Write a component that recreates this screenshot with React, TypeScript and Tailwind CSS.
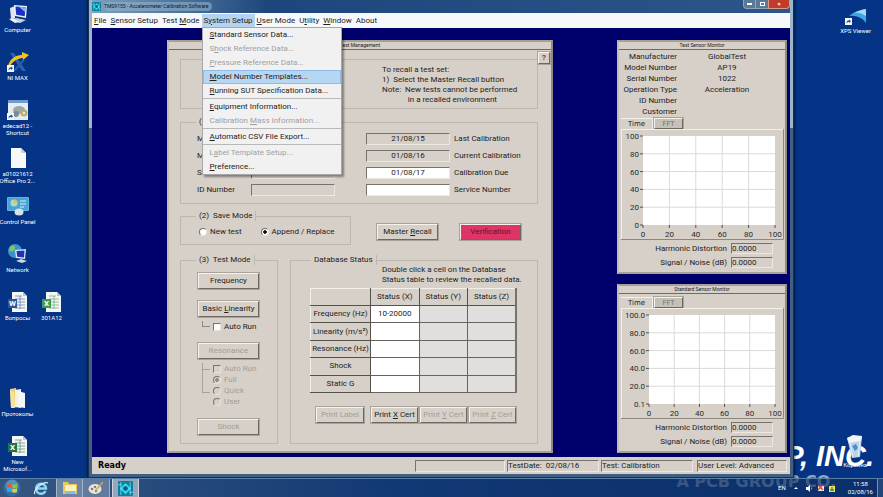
import { useId, type ReactNode } from "react";

/* ---------- desktop icons ---------- */

function ComputerIcon() {
  return (
    <svg viewBox="0 0 22 20" className="h-[20px] w-[22px]">
      <path d="M3 4 L8 2 L8 14 L4 15Z" fill="#dfe6ee" />
      <path d="M7 1 L20 2 L19 14 L8 12Z" fill="#e8eef5" />
      <path d="M8.500 2.500 L18.500 3.300 L17.700 12.300 L9.200 10.800Z" fill="#1a2fc0" />
      <path d="M12 3 L18.500 3.300 L18 8Z" fill="#7fb0f0" />
      <path d="M3 16 L9 14 L19 16 L13 19Z" fill="#c6d3df" />
      <path d="M2 15 L6 14 L12 18 L8 19Z" fill="#eef2f6" />
    </svg>
  );
}

function ShortcutArrow() {
  return (
    <g>
      <rect x="0" y="13" width="7" height="7" fill="#f4f7fb" />
      <path d="M1.500 18.500 C1.500 16 2.500 15.500 4 15.500 V14.300 L6 16.200 L4 18 V17 C3 17 2.300 17.300 1.500 18.500Z" fill="#1d4f9c" />
    </g>
  );
}

function NiMaxIcon() {
  return (
    <svg viewBox="0 0 22 20" className="h-[20px] w-[22px]">
      <path d="M3 1 L7 1 L19 19 L15 19Z" fill="#2f5fb4" />
      <path d="M15 8 L18 8 L9 19 L6 19Z" fill="#2a57ad" />
      <path d="M1 14 C3 7 8 3 15 3 V0 L22 3 L16 8 V6 C10 6.500 6 9 3 14Z" fill="#f6c31c" />
      <ShortcutArrow />
    </svg>
  );
}

function EdecadIcon() {
  return (
    <svg viewBox="0 0 22 20" className="h-[20px] w-[22px]">
      <rect x="1" y="0" width="20" height="20" fill="#e8ecf1" />
      <rect x="1" y="0" width="20" height="3" fill="#6f9bd2" />
      <ellipse cx="12" cy="10" rx="6" ry="4" fill="#9aa8a8" />
      <circle cx="17" cy="13" r="3.500" fill="#b9b06a" />
      <circle cx="9" cy="14" r="3" fill="#7b8c93" />
      <circle cx="17" cy="13" r="1.200" fill="#eee" />
      <ShortcutArrow />
    </svg>
  );
}

function FileIcon() {
  return (
    <svg viewBox="0 0 22 20" className="h-[20px] w-[22px]">
      <path d="M4 0 H14 L19 5 V20 H4Z" fill="#f7f8f8" />
      <path d="M14 0 L19 5 H14Z" fill="#c9d0d6" />
    </svg>
  );
}

function ControlPanelIcon() {
  return (
    <svg viewBox="0 0 22 20" className="h-[20px] w-[22px]">
      <rect x="0" y="1" width="22" height="14" rx="1" fill="#5fb4de" />
      <rect x="1" y="2" width="20" height="12" fill="#4aa3d4" />
      <circle cx="7" cy="7" r="3.500" fill="#a7dcc0" />
      <path d="M7 7 V3.500 A3.500 3.500 0 0 1 10.500 7Z" fill="#e6b95c" />
      <path d="M13 5 H19 M13 8 H19 M13 11 H17" stroke="#d6eefa" strokeWidth="1" />
      <ellipse cx="12" cy="16" rx="4.500" ry="3.500" fill="#d5e2ec" />
    </svg>
  );
}

function NetworkIcon() {
  return (
    <svg viewBox="0 0 22 20" className="h-[20px] w-[22px]">
      <circle cx="8" cy="7" r="7" fill="#3a93cf" />
      <path d="M3 3 C6 0 9 2 8 5 C7 8 3 8 2 6Z M9 8 C12 7 14 9 12 12Z" fill="#7cc46d" />
      <path d="M8 6 L19 5 L18 15 L9 14Z" fill="#e3e9f0" />
      <path d="M9.500 7 L17.500 6.500 L17 13.500 L10.200 12.800Z" fill="#1733b6" />
      <path d="M9 17 L14 15 L20 17 L15 19Z" fill="#cbd6e1" />
    </svg>
  );
}

function SheetIcon({ color, letter }: { color: string; letter: string }) {
  return (
    <svg viewBox="0 0 22 20" className="h-[20px] w-[22px]">
      <path d="M5 0 H16 L20 4 V20 H5Z" fill="#f3f6f4" />
      <path d="M16 0 L20 4 H16Z" fill="#b8c4bd" />
      <path d="M8 4 H15 M8 7 H18 M8 10 H18 M8 13 H18 M8 16 H18 M13 4 V17" stroke={color} strokeWidth="0.800" opacity="0.700" />
      <rect x="1" y="7" width="9" height="9" fill={color} />
      <text x="5.500" y="14.200" fontSize="8" fontWeight="700" textAnchor="middle" fill="#fff">{letter}</text>
    </svg>
  );
}

function FolderIcon() {
  return (
    <svg viewBox="0 0 22 20" className="h-[20px] w-[22px]">
      <path d="M3 1 L9 0 L10 19 L4 20Z" fill="#e9cf7c" />
      <path d="M8 2 L14 1 L14 20 L8 19Z" fill="#f7f1da" />
      <path d="M11 3 L18 5 L18 20 L11 19Z" fill="#f4f6f8" />
      <path d="M3 2 L7 4 L8 20 L4 20Z" fill="#f6e3a0" />
    </svg>
  );
}

function XpsIcon() {
  return (
    <svg viewBox="0 0 22 20" className="h-[20px] w-[22px]">
      <path d="M4 11 C9 7 14 5 21 4 L21 18 C18 13 11 10 4 11Z" fill="#3ea6e6" />
      <path d="M9 8 C13 6 17 4.500 21 4 L21 11 C17 8 13 7 9 8Z" fill="#9bdcf8" />
      <ShortcutArrow />
    </svg>
  );
}

function RecycleIcon() {
  return (
    <svg viewBox="0 0 22 24" className="h-[24px] w-[22px]">
      <path d="M3 3 L18 1 L16 22 L8 23Z" fill="#b9d3ea" />
      <path d="M3 3 L9 0 L18 1 L17 6 L5 8Z" fill="#f1f5f8" />
      <path d="M8 11 L12 9 L14 13 L11 16Z" fill="#4b8fd0" />
      <path d="M6 7 L9 22 M16 6 L14 21" stroke="#e7f0f8" strokeWidth="1" />
    </svg>
  );
}

function DesktopItem({ icon, label, className = "" }: { icon: ReactNode; label: string; className?: string }) {
  return (
    <button className={`flex flex-col items-center gap-[2px] whitespace-pre text-center text-[6px] leading-[7px] text-white ${className}`}>
      {icon}
      {label}
    </button>
  );
}

/* ---------- form parts ---------- */

const group = "border border-[#bdb7ad]";
const legendStyle = "h-[10px] border-r border-[#bdb7ad] px-[3px] leading-[10px] whitespace-pre";
const sunken = "border border-r-[#ece8e1] border-b-[#ece8e1] border-t-[#77736c] border-l-[#77736c]";
const raised = "border border-t-[#f6f3ee] border-l-[#f6f3ee] border-r-[#6c6861] border-b-[#6c6861] shadow-[0_0_0_1px_#a9a49b]";

function PushButton({ children, disabled, className = "" }: { children: ReactNode; disabled?: boolean; className?: string }) {
  return (
    <button
      disabled={disabled}
      className={`${raised} flex h-[16px] shrink-0 items-center justify-center whitespace-pre leading-[10px] disabled:text-[#a39e95] ${className}`}
    >
      <span>{children}</span>
    </button>
  );
}

function Choice({ type, name, label, checked, disabled }: { type: "radio" | "checkbox"; name?: string; label: string; checked?: boolean; disabled?: boolean }) {
  const shape =
    type === "radio"
      ? "rounded-full checked:bg-[radial-gradient(circle,#111_0_1.500px,transparent_2px)] disabled:checked:bg-[radial-gradient(circle,#8f8a82_0_1.500px,transparent_2px)]"
      : "";
  return (
    <label className={`flex h-[11px] items-center gap-[3px] leading-[11px] ${disabled ? "text-[#a39e95]" : ""}`}>
      <input
        type={type}
        name={name}
        defaultChecked={checked}
        disabled={disabled}
        className={`size-[8px] appearance-none border border-t-[#77736c] border-l-[#77736c] border-r-[#e8e4dd] border-b-[#e8e4dd] bg-white disabled:bg-[#d6d0c8] ${shape}`}
      />
      {label}
    </label>
  );
}

function Field({ label, value, after, editable }: { label: string; value: string; after?: boolean; editable?: boolean }) {
  const id = useId();
  const text = (
    <label htmlFor={id} className={after ? "ml-[4px]" : "w-[54px]"}>
      {label}
    </label>
  );
  return (
    <div className="flex h-[12px] items-center whitespace-nowrap leading-[12px]">
      {!after && text}
      <input
        id={id}
        defaultValue={value}
        readOnly={!editable}
        className={`${sunken} h-[12px] w-[84px] text-center ${editable ? "bg-white" : "bg-transparent"}`}
      />
      {after && text}
    </div>
  );
}

function Readout({ label }: { label: string }) {
  const id = useId();
  return (
    <div className="flex h-[11px] items-center justify-end gap-[4px] pr-[12px] leading-[11px]">
      <label htmlFor={id}>{label}</label>
      <input id={id} readOnly defaultValue="0.0000" className={`${sunken} h-[11px] w-[42px] bg-transparent`} />
    </div>
  );
}

/* ---------- menu ---------- */

type Entry = { before?: string; key: string; after: string };

function Mnemonic({ before = "", after, letter }: { before?: string; after: string; letter: string }) {
  return (
    <span>
      {before}
      <u>{letter}</u>
      {after}
    </span>
  );
}

const setupMenu: ({ separator: true } | (Entry & { disabled?: boolean; active?: boolean }))[] = [
  { key: "S", after: "tandard Sensor Data..." },
  { before: "S", key: "h", after: "ock Reference Data...", disabled: true },
  { key: "P", after: "ressure Reference Data...", disabled: true },
  { key: "M", after: "odel Number Templates...", active: true },
  { key: "R", after: "unning SUT Specification Data..." },
  { separator: true },
  { key: "E", after: "quipment Information..." },
  { before: "Calibration ", key: "M", after: "ass Information...", disabled: true },
  { separator: true },
  { key: "A", after: "utomatic CSV File Export..." },
  { separator: true },
  { before: "L", key: "a", after: "bel Template Setup...", disabled: true },
  { key: "P", after: "reference..." },
];

function SetupMenu() {
  return (
    <div className="absolute top-[13px] left-0 z-20 flex w-[140px] flex-col border border-[#a7a7a7] bg-[#f1f1f1] shadow-[2px_2px_2px_#0006]">
      {setupMenu.map((item, i) =>
        "separator" in item ? (
          <hr key={i} className="my-0 h-[2px] border-0 border-t border-[#b9b9b9]" />
        ) : (
          <button
            key={i}
            disabled={item.disabled}
            className={`h-[14px] border px-[6px] text-left leading-[12px] disabled:text-[#a0a0a0] ${item.active ? "border-[#8fbce6] bg-[#b5d7f3]" : "border-transparent"}`}
          >
            <Mnemonic before={item.before} letter={item.key} after={item.after} />
          </button>
        ),
      )}
    </div>
  );
}

const menuBar: Entry[] = [
  { key: "F", after: "ile" },
  { key: "S", after: "ensor Setup" },
  { before: "Test ", key: "M", after: "ode" },
  { before: "S", key: "y", after: "stem Setup" },
  { key: "U", after: "ser Mode" },
  { before: "U", key: "t", after: "ility" },
  { key: "W", after: "indow" },
  { key: "", after: "About" },
];

function MenuBar() {
  return (
    <nav className="flex h-[15px] shrink-0 bg-[#f7f8fa] pt-px whitespace-nowrap">
      {menuBar.map((m) => {
        const open = m.after === "stem Setup";
        return (
          <div key={m.after} className="relative">
            <button className={`h-[13px] px-[2px] leading-[12px] ${open ? "bg-[#b5d3f0]" : ""}`}>
              <Mnemonic before={m.before} letter={m.key} after={m.after} />
            </button>
            {open && <SetupMenu />}
          </div>
        );
      })}
    </nav>
  );
}

/* ---------- child windows ---------- */

function Panel({ title, className = "", children }: { title: string; className?: string; children: ReactNode }) {
  return (
    <section className={`relative shrink-0 border-2 border-t-[#a5a199] border-l-[#c3bfae] border-r-[#8f8b84] border-b-[#a5a199] bg-[#d6d0c8] ${className}`}>
      <h2 className="h-[8px] border-b border-[#6f6b64] text-center text-[5px] leading-[7px]">{title}</h2>
      {children}
    </section>
  );
}

function SensorFields() {
  return (
    <fieldset className={`${group} mt-[8px] flex h-[87px] flex-col`}>
      <legend className={`${legendStyle} ml-[15px]`}>(1)</legend>
      <div className="flex gap-[31px] pt-[6px] pl-[16px]">
        <div className="flex flex-col gap-[5px]">
          <Field label="Manufacturer" value="GlobalTest" />
          <Field label="Model Number" value="AP19" />
          <Field label="Serial Number" value="1022" />
          <Field label="ID Number" value="" />
        </div>
        <div className="flex flex-col gap-[5px]">
          <Field after label="Last Calibration" value="21/08/15" />
          <Field after label="Current Calibration" value="01/08/16" />
          <Field after editable label="Calibration Due" value="01/08/17" />
          <Field after editable label="Service Number" value="" />
        </div>
      </div>
    </fieldset>
  );
}

function SaveMode() {
  return (
    <div className="mt-[7px] flex">
      <fieldset className={`${group} h-[34px] w-[171px]`}>
        <legend className={`${legendStyle} ml-[15px]`}>(2)  Save Mode</legend>
        <div className="flex gap-[19px] pt-[5px] pl-[18px]">
          <Choice type="radio" name="save" label="New test" />
          <Choice type="radio" name="save" label="Append / Replace" checked />
        </div>
      </fieldset>
      <div className="flex gap-[22px] pt-[13px] pl-[26px]">
        <PushButton className="w-[61px]">Master <u>R</u>ecall</PushButton>
        <PushButton className="w-[61px] bg-[#dc3566] text-[#6e0c2c]">Verification</PushButton>
      </div>
    </div>
  );
}

function TestMode() {
  return (
    <fieldset className={`${group} h-[189px] w-[98px]`}>
      <legend className={`${legendStyle} ml-[15px]`}>(3)  Test Mode</legend>
      <div className="flex flex-col pt-[8px] pl-[17px]">
        <PushButton className="w-[61px]">Frequency</PushButton>
        <PushButton className="mt-[12px] w-[61px]">Basic <u>L</u>inearity</PushButton>
        <div className="mt-[4px] flex pl-[4px]">
          <span className="mr-[3px] h-[6px] w-[8px] border-b border-l border-[#8b867e]" />
          <Choice type="checkbox" label="Auto Run" />
        </div>
        <PushButton disabled className="mt-[11px] w-[61px]">Resonance</PushButton>
        <div className="mt-[4px] flex pl-[4px]">
          <div className="mr-[3px] h-[30px] w-[8px] border-b border-l border-[#a8a39a]">
            <div className="h-[7px] border-b border-[#a8a39a]" />
          </div>
          <div className="flex flex-col">
            <Choice type="checkbox" label="Auto Run" disabled />
            <Choice type="radio" name="range" label="Full" checked disabled />
            <Choice type="radio" name="range" label="Quick" disabled />
            <Choice type="radio" name="range" label="User" disabled />
          </div>
        </div>
        <PushButton disabled className="mt-[12px] w-[61px]">Shock</PushButton>
      </div>
    </fieldset>
  );
}

const statusRows = ["Frequency (Hz)", "Linearity (m/s²)", "Resonance (Hz)", "Shock", "Static G"];

function DatabaseStatus() {
  return (
    <fieldset className={`${group} h-[189px] flex-1`}>
      <legend className={`${legendStyle} ml-[20px]`}>Database Status</legend>
      <p className="pl-[91px] leading-[10px] whitespace-pre">{"Double click a cell on the Database\nStatus table to review the recalled data."}</p>
      <table className="mt-[3px] ml-[19px] h-[105px] w-[207px] table-fixed border-collapse border-r-2 border-b border-r-[#77736c] border-b-[#55524c] text-center leading-[10px]">
        <thead>
          <tr className="h-[17px]">
            <td className="w-[60px] border border-t-[#f3f0ea] border-l-[#f3f0ea] border-r-[#55524c] border-b-[#55524c]" />
            {["X", "Y", "Z"].map((axis) => (
              <th key={axis} scope="col" className="border border-t-[#f3f0ea] border-l-[#55524c] border-r-[#55524c] border-b-[#55524c] p-0 font-normal">
                Status ({axis})
              </th>
            ))}
          </tr>
        </thead>
        <tbody>
          {statusRows.map((row, i) => (
            <tr key={row} className="h-[17px]">
              <th scope="row" className="border border-t-[#55524c] border-r-[#55524c] border-b-[#55524c] border-l-[#f3f0ea] p-0 font-normal whitespace-nowrap">
                {row}
              </th>
              <td className="border border-[#67635d] bg-white p-0">{i === 0 ? "10-20000" : ""}</td>
              <td className="border border-[#67635d] bg-[#e0dfde] p-0" />
              <td className="border border-[#67635d] bg-[#e0dfde] p-0" />
            </tr>
          ))}
        </tbody>
      </table>
      <div className="flex gap-[2px] pt-[14px] pl-[25px]">
        <PushButton disabled className="mr-[5px] w-[48px]">Print Label</PushButton>
        <PushButton className="w-[47px]">Print <u>X</u> Cert</PushButton>
        <PushButton disabled className="w-[47px]">Print <u>Y</u> Cert</PushButton>
        <PushButton disabled className="w-[47px]">Print <u>Z</u> Cert</PushButton>
      </div>
    </fieldset>
  );
}

function TestManagement() {
  return (
    <Panel title="Test Management" className="w-[386px] pb-[7px]">
      <button aria-label="Help" className={`${raised} absolute top-[10px] right-px size-[12px] text-center font-bold leading-[10px] text-[#b02a3c]`}>
        ?
      </button>
      <div className="pr-[13px] pl-[11px]">
        <div className={`${group} mt-[9px] h-[50px] pt-[5px] pl-[201px]`}>
          <p className="leading-[10px] whitespace-pre">
            {"To recall a test set:\n1)  Select the Master Recall button\nNote:  New tests cannot be performed\n             in a recalled environment"}
          </p>
        </div>
        <SensorFields />
        <SaveMode />
        <div className="mt-[10px] flex gap-[12px]">
          <TestMode />
          <DatabaseStatus />
        </div>
      </div>
    </Panel>
  );
}

function Chart({ left, labels }: { left: number; labels: string[] }) {
  const right = 154;
  const top = 7;
  const bottom = 96;
  const xs = [0, 1, 2, 3, 4, 5].map((i) => left + (i * (right - left)) / 5);
  const ys = labels.map((_, i) => top + (i * (bottom - top)) / 5);
  return (
    <svg viewBox="0 0 163 111" className="h-[111px] w-[163px] text-[8px]" fill="#2a2a2a">
      <path d="M0.500 110 V0.500 H163" stroke="#f3f0ea" fill="none" />
      <path d="M0 110.500 H162.500 V0" stroke="#8c8880" fill="none" />
      <rect x={left} y={top} width={right - left} height={bottom - top} fill="#fff" />
      {ys.map((y, i) => (
        <g key={i}>
          {i > 0 && i < 5 && <line x1={left} x2={right} y1={y} y2={y} stroke="#d9d9d9" />}
          <line x1={left - 3} x2={left} y1={y} y2={y} stroke="#55524c" />
          <text x={left - 4} y={y + 3} textAnchor="end">{labels[i]}</text>
        </g>
      ))}
      {xs.map((x, i) => (
        <g key={i}>
          {i > 0 && i < 5 && <line x1={x} x2={x} y1={top} y2={bottom} stroke="#d9d9d9" />}
          <line x1={x} x2={x} y1={bottom} y2={bottom + 3} stroke="#55524c" />
          <text x={x} y={bottom + 12} textAnchor="middle">{i * 20}</text>
        </g>
      ))}
    </svg>
  );
}

function Tabs() {
  return (
    <div className="flex h-[11px] pl-[2px]" role="tablist">
      <button role="tab" aria-selected="true" className="w-[32px] border-t border-r border-t-[#f3f0ea] border-r-[#f3f0ea] text-center font-['DejaVu_Sans'] text-[7px] leading-[10px]">
        Time
      </button>
      <button role="tab" aria-selected="false" className={`${raised} ml-px w-[29px] bg-[#c5c0b8] text-center font-['DejaVu_Sans'] text-[7px] leading-[8px] text-[#77736c]`}>
        FFT
      </button>
    </div>
  );
}

const sensorInfo = [
  ["Manufacturer", "GlobalTest"],
  ["Model Number", "AP19"],
  ["Serial Number", "1022"],
  ["Operation Type", "Acceleration"],
  ["ID Number", ""],
  ["Customer", ""],
];

function Monitors() {
  return (
    <div className="flex shrink-0 flex-col gap-[10px]">
      <Panel title="Test Sensor Monitor" className="w-[170px] pb-[4px]">
        <dl className="mb-px grid auto-rows-[11px] grid-cols-[58px_100px] pt-px leading-[11px]">
          {sensorInfo.map(([k, v]) => (
            <div key={k} className="contents">
              <dt className="text-right whitespace-nowrap">{k}</dt>
              <dd className="text-center">{v}</dd>
            </div>
          ))}
        </dl>
        <Tabs />
        <div className="pb-[3px] pl-[2px]">
          <Chart left={22} labels={["100", "80", "60", "40", "20", "0"]} />
        </div>
        <div className="flex flex-col gap-[3px]">
          <Readout label="Harmonic Distortion" />
          <Readout label="Signal / Noise (dB)" />
        </div>
      </Panel>
      <Panel title="Standard Sensor Monitor" className="w-[170px] pb-[4px]">
        <div className="pt-[3px]">
          <Tabs />
        </div>
        <div className="pb-[3px] pl-[2px]">
          <Chart left={28} labels={["100.0", "80.0", "60.0", "40.0", "20.0", "0.1"]} />
        </div>
        <div className="flex flex-col gap-[3px]">
          <Readout label="Harmonic Distortion" />
          <Readout label="Signal / Noise (dB)" />
        </div>
      </Panel>
    </div>
  );
}

/* ---------- application window ---------- */

function AppGlyph({ className }: { className: string }) {
  return (
    <svg viewBox="0 0 16 16" className={className}>
      <rect width="16" height="16" rx="1" fill="#0d7f9c" />
      <path d="M8 2 L14 8 L8 14 L2 8Z" fill="#37d8ec" />
      <circle cx="8" cy="8" r="2.500" fill="#0b5d84" />
      <path d="M3 1 V15 M13 1 V15 M0 4 H4 M12 12 H16" stroke="#7deafa" strokeWidth="0.800" />
    </svg>
  );
}

function AppWindow() {
  return (
    <main className="relative z-10 flex min-w-0 flex-1 flex-col border border-t-0 border-[#1c2f4c] bg-[linear-gradient(#9db4cd_0_128px,#3f5f85_128px)] px-[3px] pb-[3px] text-[#222] shadow-[0_0_3px_#000]">
      <header className="flex h-[13px] shrink-0 items-center gap-[3px] bg-linear-to-r from-[#7fa0bd] via-[#1d477c] via-25% to-[#2c568a] text-[5px] leading-[9px] text-[#0b1a2c]">
        <AppGlyph className="size-[9px]" />
        <h1 className="rounded-full bg-[#8fb0cc]/60 pr-[4px]">TMS9155 - Accelerometer Calibration Software</h1>
        <div className="ml-auto flex h-[9px] self-start text-[6px] leading-[8px] text-white">
          <button aria-label="Minimize" className="flex w-[13px] items-center justify-center rounded-bl-sm border border-t-0 border-[#8fa3ba] bg-[#5b7898]">
            <span className="h-[2px] w-[5px] bg-white" />
          </button>
          <button aria-label="Maximize" className="flex w-[12px] items-center justify-center border-b border-[#8fa3ba] bg-[#5b7898]">
            <span className="h-[4px] w-[5px] border border-white" />
          </button>
          <button aria-label="Close" className="w-[22px] rounded-br-sm border border-t-0 border-[#d99a8c] bg-[#c23a2a] font-bold">
            ×
          </button>
        </div>
      </header>
      <MenuBar />
      <div className="flex flex-1 items-start justify-between bg-[#00006c] pt-[12px] pr-[3px] pl-[75px]">
        <TestManagement />
        <Monitors />
      </div>
      <footer className="flex h-[17px] shrink-0 items-center bg-[#d6d0c8] pr-[3px] pl-[6px] leading-[10px]">
        <strong className="mr-auto font-['DejaVu_Sans'] text-[8px] text-black">Ready</strong>
        <div className="flex gap-[2px] whitespace-pre">
          <div className={`${sunken} h-[12px] w-[90px]`} />
          <div className={`${sunken} h-[12px] w-[92px]`}>TestDate:  02/08/16</div>
          <div className={`${sunken} h-[12px] w-[92px]`}>Test: Calibration</div>
          <div className={`${sunken} ml-[2px] h-[12px] w-[90px]`}>User Level: Advanced</div>
        </div>
      </footer>
    </main>
  );
}

/* ---------- taskbar ---------- */

function Taskbar() {
  return (
    <footer className="relative z-10 flex h-[19px] shrink-0 items-center border-t border-[#5a7ea6] bg-linear-to-r from-[#3a5a80]/90 via-[#143a70]/80 via-45% to-[#0f2c58]/60 text-white">
      <button aria-label="Start" className="ml-[3px]">
        <svg viewBox="0 0 18 18" className="size-[18px]">
          <circle cx="9" cy="9" r="8.500" fill="#2d6ea5" />
          <circle cx="9" cy="7" r="6.500" fill="#6fa9d0" opacity="0.600" />
          <path d="M4 5 C6 4 7 4 8.500 5 V8.500 C7 7.500 6 7.500 4 8.500Z" fill="#e8562a" />
          <path d="M9.300 5 C11 6 12 6 14 5 V8.500 C12 9.500 11 9.500 9.300 8.500Z" fill="#8fc63f" />
          <path d="M4 9.500 C6 8.500 7 8.500 8.500 9.500 V13 C7 12 6 12 4 13Z" fill="#35a7e6" />
          <path d="M9.300 9.500 C11 10.500 12 10.500 14 9.500 V13 C12 14 11 14 9.300 13Z" fill="#fbc52c" />
        </svg>
      </button>
      <button aria-label="Internet Explorer" className="ml-[12px]">
        <svg viewBox="0 0 16 16" className="size-[16px]" fill="none">
          <path d="M12.500 11 A5 5 0 1 1 13 8.500 H4" stroke="#8ed8fa" strokeWidth="2.400" />
          <path d="M2 14 C-1 11 10 1 15 3" stroke="#dff3fd" strokeWidth="1.100" />
        </svg>
      </button>
      <button aria-label="Explorer" className="ml-[7px] flex h-full w-[27px] items-center justify-center border-x border-white/40 bg-white/30">
        <svg viewBox="0 0 16 14" className="h-[14px] w-[16px]">
          <path d="M1 1 H6 L7 3 H15 V13 H1Z" fill="#e9c75e" />
          <rect x="3" y="4" width="11" height="6" fill="#fbf0b8" />
          <rect x="3" y="10" width="10" height="3" fill="#8dbbe0" />
        </svg>
      </button>
      <button aria-label="Paint" className="flex h-full w-[27px] items-center justify-center border-r border-white/40 bg-white/25">
        <svg viewBox="0 0 16 14" className="h-[14px] w-[16px]">
          <ellipse cx="7" cy="8" rx="6.500" ry="5" fill="#e8e3d6" />
          <circle cx="4" cy="8" r="1.200" fill="#d2553a" />
          <circle cx="7" cy="6" r="1.200" fill="#4a90d0" />
          <circle cx="8" cy="10" r="1.200" fill="#63a74b" />
          <path d="M15 1 L8 9" stroke="#caa66a" strokeWidth="1.500" />
        </svg>
      </button>
      <button aria-label="Calibration software" className="ml-[2px] flex h-full w-[27px] items-center justify-center border-x border-white/50 bg-white/50">
        <AppGlyph className="size-[15px]" />
      </button>
      <div className="ml-auto flex h-full items-center text-[6px] leading-[8px]">
        <span className="mr-[8px]">EN</span>
        <span className="mr-[8px] border-x-2 border-b-2 border-x-transparent border-b-white" />
        <svg viewBox="0 0 30 9" className="mr-[12px] h-[9px] w-[30px]">
          <path d="M0 3 H2 L4 1 V8 L2 6 H0Z M5.500 3 Q7 4.500 5.500 6" fill="#fff" />
          <rect x="12" y="2" width="6" height="5" fill="#eef2f6" />
          <path d="M12 1 L17 6 M17 1 L12 6" stroke="#d8402f" strokeWidth="1.300" />
          <rect x="23" y="2" width="6" height="6" fill="#e4e95a" />
          <path d="M24 6 H28 M26 3 V7" stroke="#3f5a2a" />
        </svg>
        <time className="mr-[4px] text-center">
          11:58
          <br />
          02/08/16
        </time>
        <button aria-label="Show desktop" className="h-full w-[6px] border-l border-white/40 bg-white/10" />
      </div>
    </footer>
  );
}

export default function App() {
  return (
    <div className="relative flex h-screen w-full flex-col overflow-hidden bg-[#053486] font-[Roboto,'Liberation_Sans',sans-serif] text-[8px]">
      <p className="absolute right-[9px] bottom-[23px] font-['Liberation_Sans',sans-serif] text-[29px] leading-[36px] font-bold whitespace-nowrap text-white italic">
        GROUP, INC.
      </p>
      <p className="absolute right-[47px] bottom-[6px] font-['DejaVu_Sans',sans-serif] text-[16px] leading-[18px] font-bold whitespace-nowrap text-[#8fa6c6]">
        A PCB GROUP CO.
      </p>
      <div className="flex min-h-0 flex-1">
        <aside className="grid w-[88px] shrink-0 auto-rows-[48px] grid-cols-[35px_33px] content-start pt-[4px]">
          <DesktopItem className="col-start-1" icon={<ComputerIcon />} label="Computer" />
          <DesktopItem className="col-start-1" icon={<NiMaxIcon />} label="NI MAX" />
          <DesktopItem className="col-start-1" icon={<EdecadIcon />} label={"edecad12 -\nShortcut"} />
          <DesktopItem className="col-start-1" icon={<FileIcon />} label={"a01021612\nOffice Pro 2..."} />
          <DesktopItem className="col-start-1" icon={<ControlPanelIcon />} label="Control Panel" />
          <DesktopItem className="col-start-1" icon={<NetworkIcon />} label="Network" />
          <DesktopItem className="col-start-1" icon={<SheetIcon color="#2b579a" letter="W" />} label="Вопросы" />
          <DesktopItem className="col-start-2" icon={<SheetIcon color="#3f9a55" letter="X" />} label="301A12" />
          <DesktopItem className="col-start-1 row-start-9" icon={<FolderIcon />} label="Протоколы" />
          <DesktopItem className="col-start-1 row-start-10" icon={<SheetIcon color="#217346" letter="X" />} label={"New\nMicrosof..."} />
        </aside>
        <AppWindow />
        <aside className="relative z-10 flex w-[89px] shrink-0 flex-col items-end justify-between pt-[5px] pr-[12px] pb-[10px]">
          <DesktopItem icon={<XpsIcon />} label="XPS Viewer" />
          <DesktopItem className="mr-[4px]" icon={<RecycleIcon />} label="Корзина" />
        </aside>
      </div>
      <Taskbar />
    </div>
  );
}
